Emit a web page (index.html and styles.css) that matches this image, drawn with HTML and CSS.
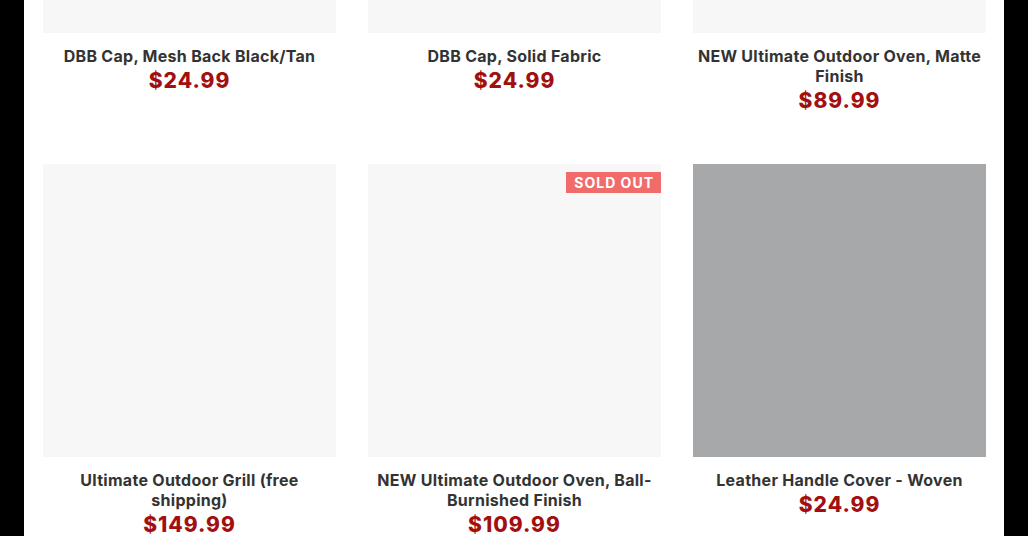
FILE: index.html
```html
<!DOCTYPE html>
<html>
<head>
<meta charset="utf-8">
<link rel="stylesheet" href="styles.css">
</head>
<body>
<main class="page">
  <div class="grid">
    <div class="card">
      <div class="thumb"></div>
      <div class="info">
        <div class="title">DBB Cap, Mesh Back Black/Tan</div>
        <div class="price">$24.99</div>
      </div>
    </div>
    <div class="card">
      <div class="thumb"></div>
      <div class="info">
        <div class="title">DBB Cap, Solid Fabric</div>
        <div class="price">$24.99</div>
      </div>
    </div>
    <div class="card">
      <div class="thumb"></div>
      <div class="info">
        <div class="title">NEW Ultimate Outdoor Oven, Matte Finish</div>
        <div class="price">$89.99</div>
      </div>
    </div>
    <div class="card">
      <div class="thumb"></div>
      <div class="info">
        <div class="title">Ultimate Outdoor Grill (free shipping)</div>
        <div class="price">$149.99</div>
      </div>
    </div>
    <div class="card">
      <div class="thumb">
        <span class="badge">Sold Out</span>
      </div>
      <div class="info">
        <div class="title">NEW Ultimate Outdoor Oven, Ball-Burnished Finish</div>
        <div class="price">$109.99</div>
      </div>
    </div>
    <div class="card">
      <div class="thumb thumb-dark"></div>
      <div class="info">
        <div class="title">Leather Handle Cover - Woven</div>
        <div class="price">$24.99</div>
      </div>
    </div>
  </div>
</main>
</body>
</html>
```

FILE: styles.css
```css
html, body {
  margin: 0;
  padding: 0;
  background: #000;
  overflow: hidden;
}
body {
  font-family: Inter, "Liberation Sans", sans-serif;
}
.page {
  width: 980px;
  margin: 0 auto;
  background: #fff;
  min-height: 536px;
  padding: 0 18px 0 19px;
  box-sizing: border-box;
}
.grid {
  margin-top: -260px;
  display: grid;
  grid-template-columns: repeat(3, 293px);
  column-gap: 32px;
  row-gap: 48px;
}
.card {
  display: flex;
  flex-direction: column;
}
.thumb {
  position: relative;
  height: 293px;
  background: #f7f7f7;
}
.thumb-dark {
  background: #a7a8aa;
}
.badge {
  position: absolute;
  top: 8px;
  right: 0;
  height: 21px;
  padding: 0 7px 0 8px;
  background: #f26b6b;
  color: #fff;
  font-size: 14px;
  font-weight: 700;
  text-transform: uppercase;
  letter-spacing: 1px;
  line-height: 21px;
}
.info {
  padding-top: 13px;
  text-align: center;
}
.title {
  font-size: 16px;
  font-weight: 700;
  line-height: 20px;
  color: #333;
  letter-spacing: 0.28px;
}
.price {
  font-size: 21px;
  font-weight: 800;
  line-height: 30px;
  color: #a30f0f;
  letter-spacing: 1px;
}
```
